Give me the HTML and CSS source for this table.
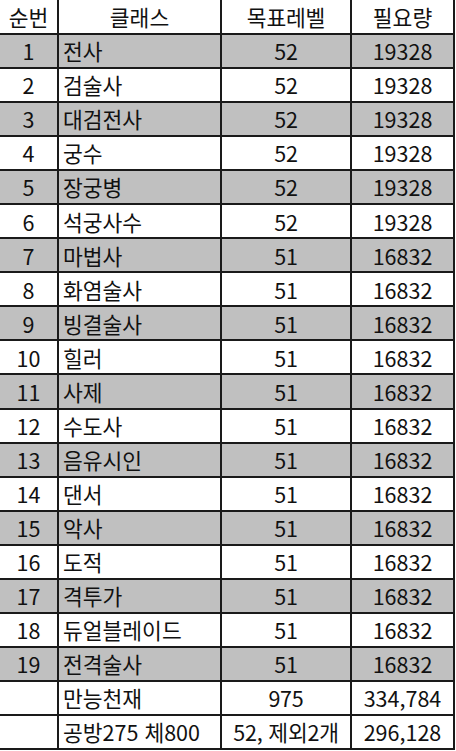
FILE: index.html
```html
<!DOCTYPE html>
<html lang="ko">
<head>
<meta charset="utf-8">
<link rel="stylesheet" href="styles.css">
</head>
<body>
<div class="sheet">
  <div class="row head"><div class="c c1">순번</div><div class="c c2 ctr">클래스</div><div class="c c3">목표레벨</div><div class="c c4">필요량</div></div>
  <div class="row g"><div class="c c1">1</div><div class="c c2">전사</div><div class="c c3">52</div><div class="c c4">19328</div></div>
  <div class="row"><div class="c c1">2</div><div class="c c2">검술사</div><div class="c c3">52</div><div class="c c4">19328</div></div>
  <div class="row g"><div class="c c1">3</div><div class="c c2">대검전사</div><div class="c c3">52</div><div class="c c4">19328</div></div>
  <div class="row"><div class="c c1">4</div><div class="c c2">궁수</div><div class="c c3">52</div><div class="c c4">19328</div></div>
  <div class="row g"><div class="c c1">5</div><div class="c c2">장궁병</div><div class="c c3">52</div><div class="c c4">19328</div></div>
  <div class="row"><div class="c c1">6</div><div class="c c2">석궁사수</div><div class="c c3">52</div><div class="c c4">19328</div></div>
  <div class="row g"><div class="c c1">7</div><div class="c c2">마법사</div><div class="c c3">51</div><div class="c c4">16832</div></div>
  <div class="row"><div class="c c1">8</div><div class="c c2">화염술사</div><div class="c c3">51</div><div class="c c4">16832</div></div>
  <div class="row g"><div class="c c1">9</div><div class="c c2">빙결술사</div><div class="c c3">51</div><div class="c c4">16832</div></div>
  <div class="row"><div class="c c1">10</div><div class="c c2">힐러</div><div class="c c3">51</div><div class="c c4">16832</div></div>
  <div class="row g"><div class="c c1">11</div><div class="c c2">사제</div><div class="c c3">51</div><div class="c c4">16832</div></div>
  <div class="row"><div class="c c1">12</div><div class="c c2">수도사</div><div class="c c3">51</div><div class="c c4">16832</div></div>
  <div class="row g"><div class="c c1">13</div><div class="c c2">음유시인</div><div class="c c3">51</div><div class="c c4">16832</div></div>
  <div class="row"><div class="c c1">14</div><div class="c c2">댄서</div><div class="c c3">51</div><div class="c c4">16832</div></div>
  <div class="row g"><div class="c c1">15</div><div class="c c2">악사</div><div class="c c3">51</div><div class="c c4">16832</div></div>
  <div class="row"><div class="c c1">16</div><div class="c c2">도적</div><div class="c c3">51</div><div class="c c4">16832</div></div>
  <div class="row g"><div class="c c1">17</div><div class="c c2">격투가</div><div class="c c3">51</div><div class="c c4">16832</div></div>
  <div class="row"><div class="c c1">18</div><div class="c c2">듀얼블레이드</div><div class="c c3">51</div><div class="c c4">16832</div></div>
  <div class="row g"><div class="c c1">19</div><div class="c c2">전격술사</div><div class="c c3">51</div><div class="c c4">16832</div></div>
  <div class="row"><div class="c c1"></div><div class="c c2">만능천재</div><div class="c c3">975</div><div class="c c4">334,784</div></div>
  <div class="row"><div class="c c1"></div><div class="c c2">공방275 체800</div><div class="c c3">52, 제외2개</div><div class="c c4">296,128</div></div>
</div>
</body>
</html>
```
FILE: styles.css
```css
html, body {
  margin: 0;
  padding: 0;
  background: #ffffff;
}
.sheet {
  width: 456px;
  font-family: "Noto Sans CJK KR", "Noto Sans", sans-serif;
  font-size: 21.5px;
  color: #111111;
}
.row {
  display: grid;
  grid-template-columns: 59px 163px 130px 103px;
  height: 34.05px;
}
.row.head {
  height: 35px;
}
.row.g .c {
  background: #c0c0c0;
}
.c {
  box-sizing: border-box;
  border-right: 2px solid #1a1a1a;
  border-bottom: 2px solid #1a1a1a;
  display: flex;
  align-items: center;
  justify-content: center;
  white-space: nowrap;
  overflow: hidden;
  line-height: 1;
}
.c2 {
  justify-content: flex-start;
  padding-left: 4px;
}
.c2.ctr {
  justify-content: center;
  padding-left: 0;
}
.c3 {
  letter-spacing: -0.2px;
}
```
